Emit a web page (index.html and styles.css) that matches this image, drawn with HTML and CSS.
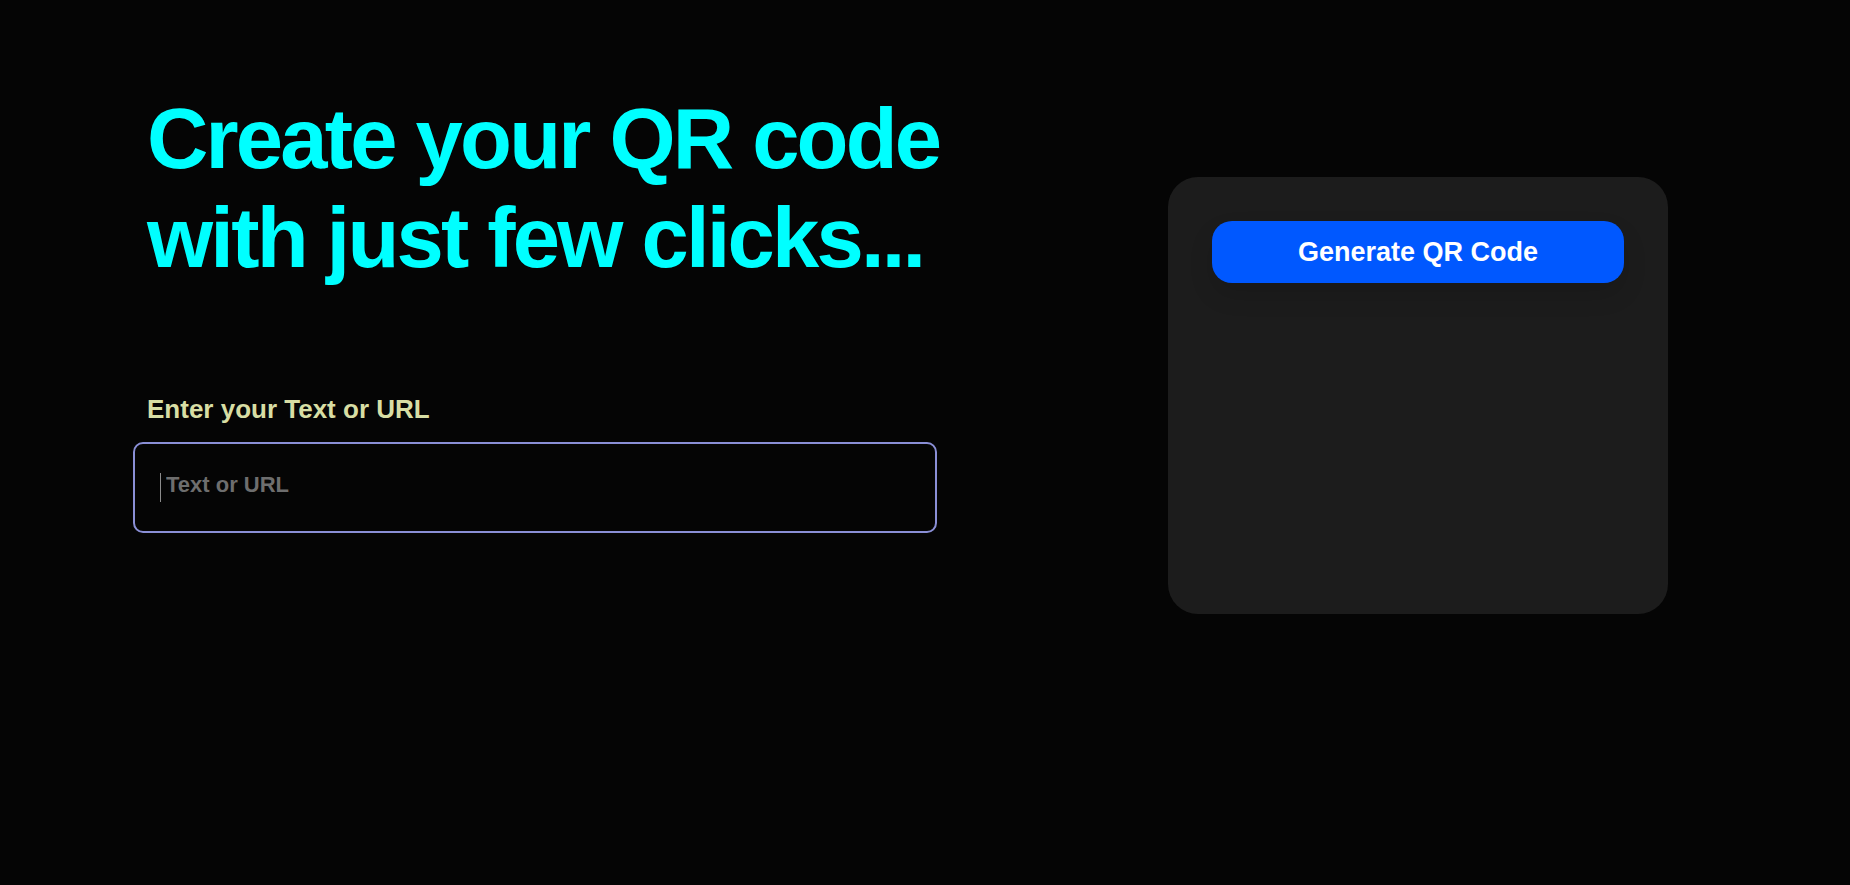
FILE: index.html
```html
<!DOCTYPE html>
<html lang="en">
<head>
<meta charset="utf-8">
<title>QR Code Generator</title>
<link rel="stylesheet" href="styles.css">
</head>
<body>
<main class="page">
  <section class="left">
    <h1 class="title">Create your QR code with just few clicks...</h1>
    <label class="label" for="qr-text">Enter your Text or URL</label>
    <div class="field-wrap">
      <input class="field" id="qr-text" type="text" placeholder="Text or URL">
    </div>
  </section>
  <section class="card">
    <button class="btn" type="button">Generate QR Code</button>
  </section>
</main>
</body>
</html>
```
FILE: styles.css
```css
* { box-sizing: border-box; }
html, body { margin: 0; padding: 0; }
body {
  background: #050505;
  font-family: "Liberation Sans", Arial, sans-serif;
  width: 1850px;
  height: 885px;
  overflow: hidden;
}
.page {
  display: flex;
  align-items: flex-start;
  padding-left: 133px;
  gap: 231px;
}
.left {
  display: flex;
  flex-direction: column;
  width: 804px;
  padding-top: 89px;
}
.title {
  margin: 0;
  padding-left: 14px;
  width: 830px;
  color: #00ffff;
  font-size: 85px;
  font-weight: 700;
  line-height: 99px;
  letter-spacing: -2.8px;
}
.label {
  margin-top: 107px;
  padding-left: 14px;
  color: #d8dea4;
  font-size: 26px;
  font-weight: 700;
  line-height: 30px;
}
.field-wrap {
  position: relative;
  margin-top: 18px;
  width: 804px;
}
.field-wrap::before {
  content: "";
  position: absolute;
  left: 27px;
  top: 31px;
  width: 1px;
  height: 29px;
  background: #8c8c8c;
}
.field {
  display: block;
  width: 804px;
  height: 91px;
  background: #050505;
  border: 2px solid #8a8fd6;
  border-radius: 10px;
  padding: 0 0 6px 31px;
  color: #dddddd;
  font-family: "Liberation Sans", Arial, sans-serif;
  font-size: 22px;
  font-weight: 700;
  outline: none;
}
.field::placeholder { color: #6e6e6e; }
.card {
  margin-top: 177px;
  width: 500px;
  height: 437px;
  background: #1c1c1c;
  border-radius: 30px;
  padding: 44px;
}
.btn {
  display: block;
  width: 100%;
  height: 62px;
  border: none;
  border-radius: 20px;
  background: #0058ff;
  color: #ffffff;
  font-family: "Liberation Sans", Arial, sans-serif;
  font-size: 27px;
  font-weight: 700;
  box-shadow: 0 12px 24px rgba(0, 0, 0, 0.12);
  cursor: pointer;
}
```
